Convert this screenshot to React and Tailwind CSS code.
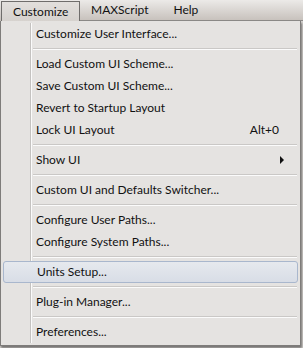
import React from 'react';

const font = { fontFamily: 'Lato, "Noto Sans", sans-serif' };

const items = [
  { label: 'Customize User Interface...' },
  'sep',
  { label: 'Load Custom UI Scheme...' },
  { label: 'Save Custom UI Scheme...' },
  { label: 'Revert to Startup Layout' },
  { label: 'Lock UI Layout', shortcut: 'Alt+0' },
  'sep',
  { label: 'Show UI', submenu: true },
  'sep',
  { label: 'Custom UI and Defaults Switcher...' },
  'sep',
  { label: 'Configure User Paths...' },
  { label: 'Configure System Paths...' },
  'sep',
  { label: 'Units Setup...', active: true },
  'sep',
  { label: 'Plug-in Manager...' },
  'sep',
  { label: 'Preferences...' },
];

function Gutter() {
  return <div className="w-[30px] shrink-0 border-r border-[#c4c2c0] shadow-[1px_0_0_#fbfbfb]" />;
}

function Separator() {
  return (
    <div className="flex h-[8px]">
      <Gutter />
      <div className="flex flex-1 items-center pl-[2px] pr-[3px]">
        <div className="h-[2px] w-full border-t border-[#cac8c6] border-b border-b-[#fbfbfb]" />
      </div>
    </div>
  );
}

function Item({ label, shortcut, submenu, active }) {
  if (active) {
    return (
      <div className="mx-[2px] flex h-[22px] items-center rounded-[3px] border border-[#a9b7cd] bg-linear-to-b from-[#e6e9ee] to-[#d8dde6] pl-[33px] text-[#111]">
        {label}
      </div>
    );
  }
  return (
    <div className="flex h-[22px]">
      <Gutter />
      <div className="flex flex-1 items-center pl-[5px] pr-[21px] text-[#111]">
        <span className="flex-1">{label}</span>
        {shortcut && <span>{shortcut}</span>}
        {submenu && (
          <svg width="5" height="8" viewBox="0 0 5 8" className="-mr-[6px]">
            <path d="M0 0 L4 4 L0 8 Z" fill="#111" />
          </svg>
        )}
      </div>
    </div>
  );
}

export default function App() {
  return (
    <div className="h-[348px] w-[303px] overflow-hidden bg-[#d6d3d0] text-[12px]" style={font}>
      <div className="flex h-[21px] bg-linear-to-b from-[#eceae8] to-[#c6c0bb]">
        <div className="ml-[1px] mt-[1px] flex h-[20px] w-[79px] items-center border border-b-0 border-[#6f6d6b] bg-linear-to-b from-[#e2dfdc] to-[#d6d2ce] pl-[11px] text-[#111]">
          Customize
        </div>
        <div className="flex flex-1 items-center border-b border-[#8a8886] pl-[11px] text-[#111]">
          <span>MAXScript</span>
          <span className="ml-[25px]">Help</span>
        </div>
      </div>
      <div className="w-[301px] border border-t-0 border-[#7e7c7a] bg-[#e5e3e1] py-[2px] shadow-[1px_2px_2px_rgba(0,0,0,0.45)]">
        {items.map((it, i) =>
          it === 'sep' ? <Separator key={i} /> : <Item key={i} {...it} />
        )}
      </div>
    </div>
  );
}
